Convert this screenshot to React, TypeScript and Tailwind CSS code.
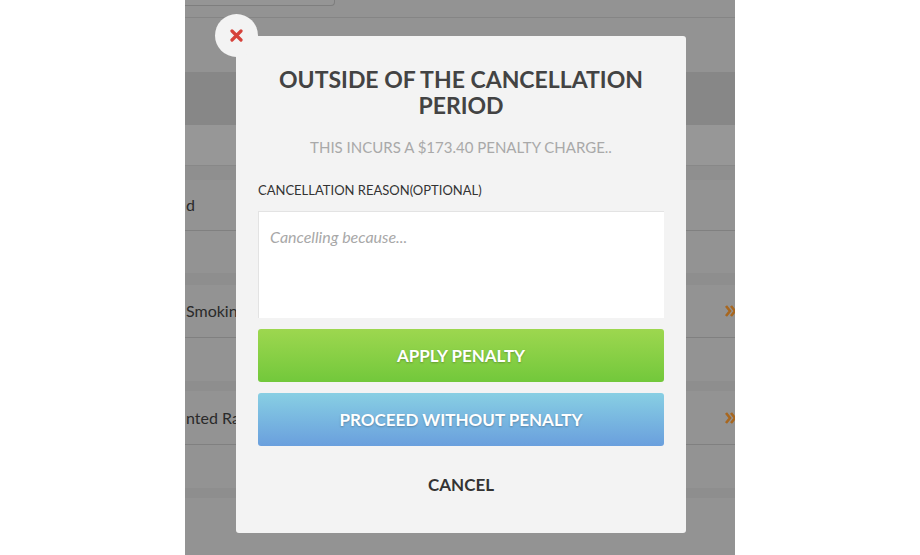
import React from 'react';

const font = { fontFamily: 'Lato, "Noto Sans", sans-serif' };

function Chevrons() {
  return (
    <svg width="10" height="14" viewBox="0 0 10 14" className="mr-0">
      <path d="M1 2 L5 7 L1 12 M6 2 L10 7 L6 12" fill="none" stroke="#a8671f" strokeWidth="2.6" strokeLinejoin="miter" />
    </svg>
  );
}

// Rows of the page sitting behind the overlay
function BackgroundPage() {
  return (
    <div className="flex h-full w-full flex-col bg-[#939393] text-[16px] text-[#2a2a2a]">
      <div className="h-[6px] w-[150px] rounded-br-[4px] border-b border-r border-[#7e7e7e] bg-[#959595]" />
      <div className="h-[12px] border-b border-[#858585]" />
      <div className="h-[54px]" />
      <div className="h-[53px] bg-[#878787]" />
      <div className="h-[40px] bg-[#979797]" />
      <div className="h-[15px] border-t border-[#888] bg-[#8f8f8f]" />
      <div className="flex h-[51px] items-center border-b border-[#808080] pl-[1px]">
        <span>d</span>
      </div>
      <div className="h-[42px]" />
      <div className="h-[12px] bg-[#8e8e8e]" />
      <div className="flex h-[53px] items-center justify-between border-b border-[#808080] pl-[1px]">
        <span>Smokin</span>
        <Chevrons />
      </div>
      <div className="h-[43px]" />
      <div className="h-[10px] bg-[#8e8e8e]" />
      <div className="flex h-[54px] items-center justify-between border-b border-[#808080] pl-[1px]">
        <span>nted Ra</span>
        <Chevrons />
      </div>
      <div className="h-[43px]" />
      <div className="h-[10px] bg-[#8e8e8e]" />
      <div className="flex-1" />
    </div>
  );
}

function CancelModal() {
  return (
    <div className="absolute left-[51px] top-[36px] flex h-[497px] w-[450px] flex-col items-center rounded-[3px] bg-[#f3f3f3] px-[22px] pt-[30px]">
      <button className="absolute -left-[21px] -top-[22px] flex h-[43px] w-[43px] items-center justify-center rounded-full bg-[#f3f3f3]">
        <svg width="13" height="13" viewBox="0 0 13 13">
          <path d="M2 2 L11 11 M11 2 L2 11" stroke="#d6423b" strokeWidth="3.2" strokeLinecap="round" />
        </svg>
      </button>
      <h2 className="text-center text-[23px] font-bold leading-[26px] text-[#434343]">
        OUTSIDE OF THE CANCELLATION
        <br />
        PERIOD
      </h2>
      <p className="mt-[19px] text-[15px] leading-[20px] text-[#a9a9a9]">THIS INCURS A $173.40 PENALTY CHARGE..</p>
      <label className="mt-[24px] self-start text-[13px] leading-[18px] text-[#333]">CANCELLATION REASON(OPTIONAL)</label>
      <div className="mt-[12px] h-[107px] w-full border-l border-t border-[#e3e3e3] bg-white px-[11px] pt-[13px]">
        <span className="text-[16px] italic text-[#a8a8a8]">Cancelling because...</span>
      </div>
      <button className="mt-[11px] h-[53px] w-full rounded-[3px] bg-gradient-to-b from-[#9dd74f] to-[#72c83b] text-[17px] font-bold text-white [text-shadow:0_1px_2px_rgba(0,0,0,0.25)]">
        APPLY PENALTY
      </button>
      <button className="mt-[11px] h-[53px] w-full rounded-[3px] bg-gradient-to-b from-[#88cfe3] to-[#6a9fdd] text-[17px] font-bold text-white [text-shadow:0_1px_2px_rgba(0,0,0,0.25)]">
        PROCEED WITHOUT PENALTY
      </button>
      <button className="mt-[26px] text-[17px] font-bold text-[#333]">CANCEL</button>
    </div>
  );
}

export default function App() {
  return (
    <div className="flex h-[555px] w-[920px] justify-center bg-white" style={font}>
      <div className="relative h-full w-[550px] overflow-hidden">
        <BackgroundPage />
        <CancelModal />
      </div>
    </div>
  );
}
